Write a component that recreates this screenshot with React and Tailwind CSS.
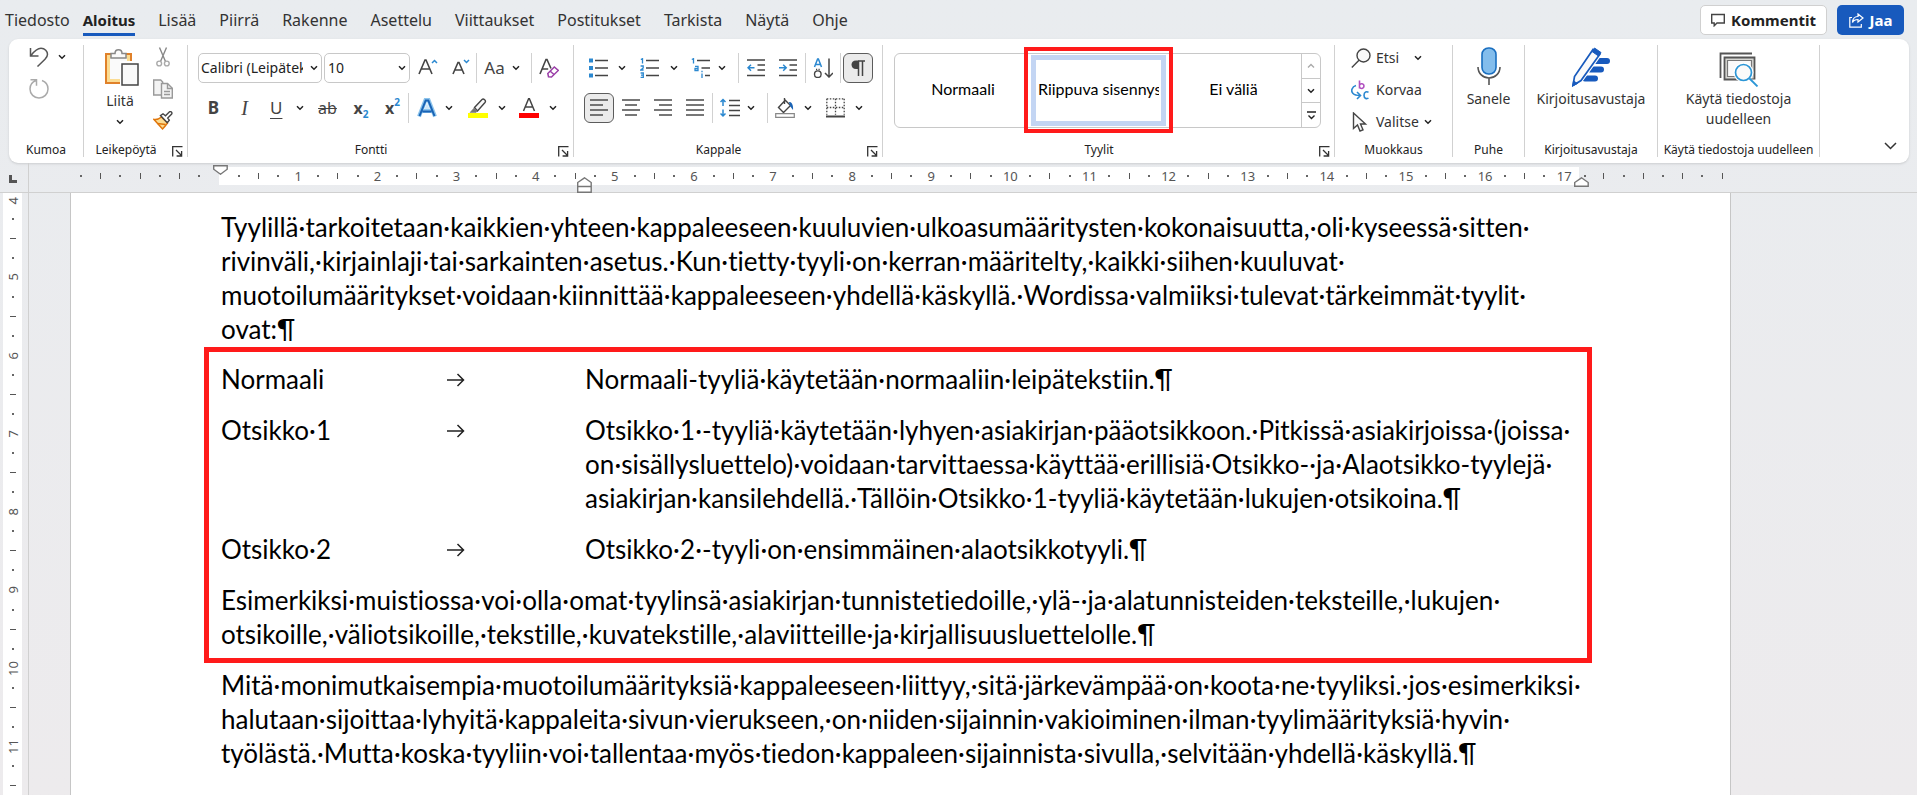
import React, { useState } from 'react';

const TABS = ['Tiedosto', 'Aloitus', 'Lisää', 'Piirrä', 'Rakenne', 'Asettelu', 'Viittaukset', 'Postitukset', 'Tarkista', 'Näytä', 'Ohje'];

const INTRO = [
    'Tyylillä tarkoitetaan kaikkien yhteen kappaleeseen kuuluvien ulkoasumääritysten kokonaisuutta, oli kyseessä sitten ',
    'rivinväli, kirjainlaji tai sarkainten asetus. Kun tietty tyyli on kerran määritelty, kaikki siihen kuuluvat ',
    'muotoilumääritykset voidaan kiinnittää kappaleeseen yhdellä käskyllä. Wordissa valmiiksi tulevat tärkeimmät tyylit ',
    'ovat:¶',
];

const STYLES = [
    { name: 'Normaali', lines: ['Normaali-tyyliä käytetään normaaliin leipätekstiin.¶'] },
    {
        name: 'Otsikko 1',
        lines: [
            'Otsikko 1 -tyyliä käytetään lyhyen asiakirjan pääotsikkoon. Pitkissä asiakirjoissa (joissa ',
            'on sisällysluettelo) voidaan tarvittaessa käyttää erillisiä Otsikko- ja Alaotsikko-tyylejä ',
            'asiakirjan kansilehdellä. Tällöin Otsikko 1-tyyliä käytetään lukujen otsikoina.¶',
        ],
    },
    { name: 'Otsikko 2', lines: ['Otsikko 2 -tyyli on ensimmäinen alaotsikkotyyli.¶'] },
];

const EXAMPLE = [
    'Esimerkiksi muistiossa voi olla omat tyylinsä asiakirjan tunnistetiedoille, ylä- ja alatunnisteiden teksteille, lukujen ',
    'otsikoille, väliotsikoille, tekstille, kuvatekstille, alaviitteille ja kirjallisuusluettelolle.¶',
];

const OUTRO = [
    'Mitä monimutkaisempia muotoilumäärityksiä kappaleeseen liittyy, sitä järkevämpää on koota ne tyyliksi. jos esimerkiksi ',
    'halutaan sijoittaa lyhyitä kappaleita sivun vierukseen, on niiden sijainnin vakioiminen ilman tyylimäärityksiä hyvin ',
    'työlästä. Mutta koska tyyliin voi tallentaa myös tiedon kappaleen sijainnista sivulla, selvitään yhdellä käskyllä.¶',
];

// --- SMALL SHARED PIECES ---
const Svg = ({ w = 20, h = 20, className = '', children }) => (
    <svg width={w} height={h} viewBox={`0 0 ${w} ${h}`} fill="none" stroke="#444" strokeWidth="1.4" className={`shrink-0 ${className}`} aria-hidden="true">
        {children}
    </svg>
);

const Chevron = ({ className = '' }) => (
    <Svg w={8} h={6} className={className}><path d="M1 1.2l3 3 3-3" stroke="#222" strokeWidth="1.5" /></Svg>
);

const Separator = ({ className = '' }) => <div className={`h-[30px] w-px shrink-0 bg-[#d1d1d1] ${className}`} />;

const IconButton = ({ label, className = '', children }) => (
    <button aria-label={label} className={`flex h-[30px] shrink-0 items-center justify-center ${className}`}>{children}</button>
);

const SplitButton = ({ label, className = '', gap = 'gap-[10px]', children }) => (
    <button aria-label={label} className={`flex h-[30px] shrink-0 items-center ${gap} ${className}`}>
        {children}
        <Chevron />
    </button>
);

const Group = ({ label, launcher, className = '', children }) => (
    <>
        <section className={`flex shrink-0 flex-col ${className}`}>
            <div className="flex-1">{children}</div>
            <div className={`flex h-6 items-center justify-center pb-[2px] ${launcher ? 'pr-1' : ''}`}>
                <span className={`flex-1 text-center text-xs leading-5 whitespace-nowrap text-[#222] ${launcher ? 'pr-1' : ''}`}>{label}</span>
                {launcher && (
                    <button aria-label={`${label}: asetukset`} className="mt-[2px]">
                        <Svg w={11} h={11}>
                            <path d="M10.5 .7H.7v9.8M4 4l5.5 5.5M9.6 5v5H4.6" stroke="#333" strokeWidth="1.3" />
                        </Svg>
                    </button>
                )}
            </div>
        </section>
        <div className="my-[6px] w-px shrink-0 bg-[#d1d1d1]" />
    </>
);

// Non-printing characters are on, so every space shows as a centred dot.
const Line = ({ text }) => (
    <span className="block whitespace-nowrap">
        {text.split(' ').map((word, i) => (
            <React.Fragment key={i}>
                {i > 0 && <span className="inline-flex w-[7px] justify-center">·</span>}
                {word}
            </React.Fragment>
        ))}
    </span>
);

const Paragraph = ({ lines, className = '' }) => (
    <p className={className}>{lines.map((l) => <Line key={l} text={l} />)}</p>
);

// --- RIBBON GROUPS ---
const UndoGroup = () => (
    <Group label="Kumoa" className="w-[74px]">
        <div className="flex flex-col gap-3 pt-2 pl-5">
            <button aria-label="Kumoa kirjoitus" className="flex items-center gap-[9px]">
                <Svg>
                    <path d="M1.5 1v8h8M2 8.500C5 4.500 8 1.300 12 1.300c4 0 6.500 3.200 6.500 6 0 2.200-1 3.500-2.500 5L8.500 19.500" stroke="#555" strokeWidth="1.500" />
                </Svg>
                <Chevron />
            </button>
            <button aria-label="Toista" className="w-5">
                <Svg>
                    <path d="M1.500 .8h6v6M7 1.500C3.500 2.800 1 6 1 10c0 5 4 9 9 9s9-4 9-9c0-4-2.500-7.300-6-8.500" stroke="#aaa" strokeWidth="1.500" />
                </Svg>
            </button>
        </div>
    </Group>
);

const ClipboardGroup = () => (
    <Group label="Leikepöytä" launcher className="w-[103px]">
        <div className="flex gap-[14px] pt-2 pl-[21px]">
            <button className="flex w-[34px] flex-col items-center pt-[2px] text-sm text-[#333]">
                <Svg w={36} h={38}>
                    <path d="M2 5h25v29H2z" fill="#fbdc93" stroke="#e0812a" strokeWidth="2" />
                    <path d="M6 9h17v21H6z" fill="#fafafa" stroke="none" />
                    <path d="M7 9V4.500h4C11 2 12.500 .8 14.500 .8S18 2 18 4.500h4V9z" fill="#fafafa" stroke="#888" strokeWidth="1.500" />
                    <path d="M18 14h17v23H18z" fill="#fafafa" stroke="white" strokeWidth="4" />
                    <path d="M18 15h16v21H18z" fill="#fafafa" stroke="#444" strokeWidth="1.500" />
                </Svg>
                <span className="mt-1 w-[30px] self-start text-center leading-5">Liitä</span>
                <Chevron className="mt-2 ml-[11px] self-start" />
            </button>
            <div className="flex flex-col gap-3">
                <button aria-label="Leikkaa">
                    <Svg>
                        <path d="M6.500 .5l6 14M13.500 .5l-6 14" stroke="#888" />
                        <circle cx="6.200" cy="16.500" r="2.400" stroke="#aaa" />
                        <circle cx="13.800" cy="16.500" r="2.400" stroke="#aaa" />
                    </Svg>
                </button>
                <button aria-label="Kopioi">
                    <Svg>
                        <path d="M8 16H.7V1h7l2 2v1" fill="#f3f3f3" stroke="#999" />
                        <path d="M8.500 4.500h6l4.800 4.800V19H8.500z" fill="#f3f3f3" stroke="#999" />
                        <path d="M14.500 4.500v5h5M11 12.500h6M11 15.500h6" stroke="#999" />
                    </Svg>
                </button>
                <button aria-label="Muotoilusivellin">
                    <Svg>
                        <path d="M1 8.500c3 .5 5-.5 7.500-2.500l6 6c-1.500 2-3 4-5 6z" fill="#fbdc93" stroke="#e0750a" strokeWidth="1.500" />
                        <path d="M4.500 12.500l8 1" stroke="#e0750a" strokeWidth="1.500" />
                        <path d="M7.500 4.500l2.500-1.700 2.500 2 4-4c1.300-.8 3 .8 2.200 2.200l-4 4 1.600 2.200-2 2.500z" fill="white" stroke="#444" />
                    </Svg>
                </button>
            </div>
        </div>
    </Group>
);

const FontGroup = ({ font, setFont, size, setSize }) => (
    <Group label="Fontti" launcher className="w-[385px]">
        <div className="flex items-center pt-[14px] pl-[10px]">
            <div className="flex h-[30px] w-[124px] items-center rounded-[5px] border border-[#c8c8c8] pr-[3px]">
                <select aria-label="Fontti" value={font} onChange={(e) => setFont(e.target.value)} className="w-[104px] min-w-0 appearance-none overflow-hidden pl-[2px] text-sm text-clip text-[#222]">
                    <option>Calibri (Leipäteksti)</option>
                    <option>Arial</option>
                </select>
                <Chevron className="ml-auto" />
            </div>
            <div className="ml-[2px] flex h-[30px] w-[86px] items-center rounded-[5px] border border-[#c8c8c8] pr-[3px]">
                <select aria-label="Fonttikoko" value={size} onChange={(e) => setSize(e.target.value)} className="min-w-0 flex-1 appearance-none pl-[3px] text-sm text-[#222]">
                    <option>10</option>
                    <option>12</option>
                </select>
                <Chevron />
            </div>
            <IconButton label="Suurenna fonttia" className="w-[36px]">
                <Svg>
                    <path d="M1 16L7 2h1l6 14M3.200 11h8.600" strokeWidth="1.600" />
                    <path d="M14 5l2.500-2.500L19 5" stroke="#2b88d0" strokeWidth="1.500" />
                </Svg>
            </IconButton>
            <IconButton label="Pienennä fonttia" className="w-[30px]">
                <Svg w={18}>
                    <path d="M1 16L6 4.500h1L12 16M3 12h7" strokeWidth="1.600" />
                    <path d="M12 2l2.500 2.500L17 2" stroke="#2b88d0" strokeWidth="1.500" />
                </Svg>
            </IconButton>
            <Separator />
            <SplitButton label="Vaihda kirjainkoko" className="w-[54px] pl-[7px]" gap="gap-[7px]">
                <span className="w-[21px] text-[17px] leading-6 text-[#444]">Aa</span>
            </SplitButton>
            <Separator />
            <IconButton label="Poista muotoilu" className="w-[34px]">
                <Svg>
                    <path d="M1 16L7 1.500h1l4 9M3.200 11h6" strokeWidth="1.600" />
                    <path d="M8.800 15.500l6.500-6.500 4 3.500-6.800 6.500-3-.3z" fill="white" stroke="#9b3fa8" strokeWidth="1.500" />
                    <path d="M11 13l4 3.500" stroke="#9b3fa8" strokeWidth="1.500" />
                </Svg>
            </IconButton>
        </div>
        <div className="flex items-center pt-[10px] pl-[10px] text-[#444]">
            <IconButton label="Lihavointi" className="w-[31px]"><span className="text-[17px] font-bold">B</span></IconButton>
            <IconButton label="Kursivointi" className="w-[31px]"><span className="font-['Liberation_Serif'] text-xl italic">I</span></IconButton>
            <SplitButton label="Alleviivaus" className="w-[50px] pl-[10px]" gap="gap-[14px]">
                <span className="text-[17px] underline underline-offset-4">U</span>
            </SplitButton>
            <IconButton label="Yliviivaus" className="w-[35px]"><span className="text-base line-through">ab</span></IconButton>
            <IconButton label="Alaindeksi" className="w-[32px]">
                <span className="text-base font-bold">x</span>
                <span className="mt-3 text-[10px] font-bold text-[#2b88d0]">2</span>
            </IconButton>
            <IconButton label="Yläindeksi" className="w-[31px]">
                <span className="text-base font-bold">x</span>
                <span className="mb-3 text-[10px] font-bold text-[#2b88d0]">2</span>
            </IconButton>
            <Separator />
            <SplitButton label="Tekstitehosteet" className="ml-2" gap="gap-2">
                <Svg>
                    <path d="M2 18.500L8.500 2h3L18 18.500M5.500 13h9" stroke="#8cc4ec" strokeWidth="4" />
                    <path d="M2.500 18L8.700 2.500h2.600L17.500 18M5.500 13.500h9" stroke="#1a63b5" strokeWidth="2" />
                    <path d="M7.500 11L10 5l2.500 6z" fill="#cfe6f8" stroke="none" />
                </Svg>
            </SplitButton>
            <SplitButton label="Korostusväri" className="ml-[15px]">
                <Svg>
                    <path d="M6.500 9.500L14 1.500c1.500-1.300 4.500 1 3 3L9.500 13z" fill="#fafafa" />
                    <path d="M6 10l3.500 3-1.500 1.500H2z" fill="#777" stroke="#777" strokeWidth=".5" />
                    <path d="M0 15h20v5H0z" fill="#ffff00" stroke="none" />
                </Svg>
            </SplitButton>
            <SplitButton label="Fontin väri" className="ml-[13px]">
                <Svg>
                    <path d="M4.500 13L9.600 .8h.8L15.500 13M6.300 9h7.400" strokeWidth="1.500" />
                    <path d="M0 15h20v5H0z" fill="#ff0000" stroke="none" />
                </Svg>
            </SplitButton>
        </div>
    </Group>
);

const Bars = ({ rows }) => (
    <Svg w={18}>
        {rows.map(([x1, x2], i) => <path key={i} d={`M${x1} ${2 + i * 5}H${x2}`} stroke="#555" strokeWidth="1.600" />)}
    </Svg>
);

const ParagraphGroup = () => (
    <Group label="Kappale" launcher className="w-[308px]">
        <div className="flex items-center pt-[14px] pl-[14px]">
            <SplitButton label="Luettelomerkit">
                <Svg>
                    <path d="M7 2.500h13M7 10h13M7 17.500h13" />
                    <path d="M1 .5h4v4H1zM1 8h4v4H1zM1 15.500h4v4H1z" fill="#2b88d0" stroke="none" />
                </Svg>
            </SplitButton>
            <SplitButton label="Numerointi" className="ml-[14px]">
                <Svg>
                    <path d="M6 2.500h13M6 10h13M6 17.500h13" />
                    <path d="M.8 1.500L2.500 .7V5.500M.6 8h2.600v2L.8 12h2.800M.6 15h2.700v4.500H.6M1 17.200h2" stroke="#2b88d0" strokeWidth="1.300" />
                </Svg>
            </SplitButton>
            <SplitButton label="Monitasoinen luettelo" className="ml-[13px]" gap="gap-[7px]">
                <Svg>
                    <path d="M6 2.500h13M10.500 10H19M14 17.500h5" />
                    <path d="M.8 1.500L2.500 .7V5.500M4 8.300h3v4.200H4v-2h3M11 15.500v4.500M11 12.800v1.500" stroke="#2b88d0" strokeWidth="1.300" />
                </Svg>
            </SplitButton>
            <Separator className="ml-3" />
            <IconButton label="Pienennä sisennystä" className="ml-2">
                <Svg>
                    <path d="M0 2h18M10.500 7H18M10.500 12H18M0 17.500h18" strokeWidth="1.500" />
                    <path d="M7.500 9.700H1M4 6.700l-3 3 3 3" stroke="#2b88d0" strokeWidth="1.500" />
                </Svg>
            </IconButton>
            <IconButton label="Suurenna sisennystä" className="ml-3">
                <Svg>
                    <path d="M0 2h18M10.500 7H18M10.500 12H18M0 17.500h18" strokeWidth="1.500" />
                    <path d="M0 9.700h7M4.200 6.700l3 3-3 3" stroke="#2b88d0" strokeWidth="1.500" />
                </Svg>
            </IconButton>
            <Separator className="ml-[6px]" />
            <IconButton label="Lajittele" className="ml-[7px]">
                <Svg>
                    <path d="M1.500 9L4.600 1h.8l3.100 8M2.600 6.500h4.800" stroke="#2b88d0" strokeWidth="1.500" />
                    <circle cx="4.800" cy="16.200" r="3.300" />
                    <path d="M3 11.500h1.200M5.500 11.500h1.200M16 .5v18M12 15l4 4 4-4" strokeWidth="1.500" />
                </Svg>
            </IconButton>
            <Separator className="ml-[7px]" />
            <IconButton label="Näytä kaikki" className="ml-[2px] w-[30px] rounded-[6px] border border-[#5c5c5c] bg-[#ebebeb]">
                <Svg w={14} h={16}>
                    <path d="M7 1h7M7.500 1v15M11.500 1v15" stroke="#444" strokeWidth="1.500" />
                    <path d="M7.500 .5H5C2 .5 .5 2.500 .5 4.700S2 9 5 9h2.500z" fill="#444" stroke="none" />
                </Svg>
            </IconButton>
        </div>
        <div className="flex items-center pt-[10px] pl-[10px]">
            <IconButton label="Tasaa vasemmalle" className="w-[30px] rounded-[6px] border border-[#5c5c5c] bg-[#ebebeb]">
                <Bars rows={[[0, 18], [0, 13], [0, 18], [0, 13]]} />
            </IconButton>
            <IconButton label="Keskitä" className="ml-2"><Bars rows={[[0, 18], [3, 15], [0, 18], [3, 15]]} /></IconButton>
            <IconButton label="Tasaa oikealle" className="ml-[14px]"><Bars rows={[[0, 18], [5, 18], [0, 18], [5, 18]]} /></IconButton>
            <IconButton label="Tasaa molemmat reunat" className="ml-[14px]"><Bars rows={[[0, 18], [0, 18], [0, 18], [0, 18]]} /></IconButton>
            <Separator className="ml-2" />
            <SplitButton label="Riviväli" className="ml-[7px]" gap="gap-[7px]">
                <Svg>
                    <path d="M9 2.500h11M9 7.500h11M9 12.500h11M9 17.500h11" strokeWidth="1.500" />
                    <path d="M3 1.500V8M.5 4L3 1.500 5.500 4M3 11.500V18M.5 15.500L3 18l2.500-2.500" stroke="#2b88d0" strokeWidth="1.500" />
                </Svg>
            </SplitButton>
            <Separator className="ml-3" />
            <SplitButton label="Varjostus" className="ml-[7px]" gap="gap-[9px]">
                <Svg>
                    <path d="M9.500 3L3.500 9.500l5 5 7-7-5.500-5.500zM9.500 0v6" />
                    <path d="M14 4c2-.5 4.500 2 4 8l-3-4z" fill="#1a63b5" stroke="none" />
                    <path d="M.7 15.700h18.600v3.600H.7z" fill="white" stroke="#888" strokeWidth="1.200" />
                </Svg>
            </SplitButton>
            <SplitButton label="Reunat" className="ml-[14px]" gap="gap-[9px]">
                <Svg>
                    <path d="M.8 .8h17.500M.8 9.500h17.500M.8 .8v16M9.500 .8v16M18.200 .8v16" strokeDasharray="1.500 1.500" strokeWidth="1.300" />
                    <path d="M0 18.500h19" strokeWidth="2" />
                </Svg>
            </SplitButton>
        </div>
    </Group>
);

const StylesGroup = () => (
    <Group label="Tyylit" launcher className="w-[451px]">
        <div className="pt-[14px] pl-[11px]">
            <div className="flex h-[75px] w-[427px] rounded-[6px] border border-[#c8c8c8] font-['Lato',sans-serif] text-base text-black [font-variant-ligatures:none]">
                <button className="w-[136px] pb-1">Normaali</button>
                <div className="relative w-[135px]">
                    <button className="mt-px h-[71px] w-full overflow-hidden border-[5px] border-[#c3d5f3] px-[2px] pb-1 text-left">
                        <span className="block overflow-hidden whitespace-nowrap">Riippuva sisennys</span>
                    </button>
                    <div className="pointer-events-none absolute -inset-x-[7px] -top-[7px] -bottom-[6px] border-4 border-[#ff1a1a]" />
                </div>
                <button className="flex-1 pb-1">Ei väliä</button>
                <div className="flex w-[19px] flex-col divide-y divide-[#c8c8c8] border-l border-[#c8c8c8]">
                    <button aria-label="Edellinen rivi" className="flex flex-1 items-center justify-center">
                        <Svg w={8} h={6}><path d="M1 4.500l3-3 3 3" stroke="#aaa" /></Svg>
                    </button>
                    <button aria-label="Seuraava rivi" className="flex flex-1 items-center justify-center"><Chevron /></button>
                    <button aria-label="Lisää tyylejä" className="flex flex-1 items-center justify-center">
                        <Svg w={9} h={9}><path d="M0 1h9M1.500 4.500l3 3 3-3" stroke="#222" /></Svg>
                    </button>
                </div>
            </div>
        </div>
    </Group>
);

const EditingGroup = () => (
    <Group label="Muokkaus" className="w-[117px]">
        <div className="flex flex-col gap-3 pt-[9px] pl-4 text-sm leading-5 text-[#333]">
            <button className="flex items-center gap-[5px]">
                <Svg>
                    <circle cx="12.500" cy="7.500" r="6.500" fill="#fafafa" />
                    <path d="M8 12.300L.8 19.500" />
                </Svg>
                <span>Etsi</span>
                <Chevron className="ml-[10px]" />
            </button>
            <button className="flex items-center gap-[5px]">
                <Svg>
                    <path d="M8.500 .5v8M8.500 5c1-2 4.500-1.700 4.500 1s-3.500 3.500-4.500 1" stroke="#b14fc0" strokeWidth="1.600" />
                    <path d="M17.500 12.300c-1.500-1-4.500-.7-4.500 2.900s3 4 4.500 2.800" stroke="#2b88d0" strokeWidth="1.600" />
                    <path d="M5 5.500C1 6.500-.5 11 2 13.500c1.500 1.500 4 2 7 2M6 12l3.500 3.500L6 19" stroke="#2b88d0" strokeWidth="1.600" />
                </Svg>
                <span>Korvaa</span>
            </button>
            <button className="flex items-center gap-[5px]">
                <Svg>
                    <path d="M2.500 1v15.500l4-3.500 2.500 6 3-1.200-2.500-5.800h5z" fill="#fafafa" />
                </Svg>
                <span>Valitse</span>
                <Chevron />
            </button>
        </div>
    </Group>
);

const BigButton = ({ icon, children }) => (
    <button className="flex w-full flex-col items-center gap-[2px] pt-2 text-sm leading-5 text-[#333]">
        {icon}
        <span>{children}</span>
    </button>
);

const DictateIcon = () => (
    <Svg w={26} h={40}>
        <path d="M2 20c0 6.500 5 11 11 11s11-4.500 11-11M13 31v7" stroke="#555" strokeWidth="1.600" />
        <rect x="6" y="1" width="14" height="26" rx="6.500" fill="#83bdec" stroke="#1a6fc0" strokeWidth="1.600" />
    </Svg>
);

const EditorIcon = () => (
    <Svg w={40} h={40}>
        <path d="M25 14h11M19 22.500h11M14 31.500h10" stroke="#185abd" strokeWidth="6" strokeLinecap="round" />
        <path d="M22 2.500l7 4.500L9.500 34 2 38.500l1.500-9z" fill="#fafafa" stroke="white" strokeWidth="4" />
        <path d="M22 2.500l7 4.500L10 33.500 2 38.500l1.500-9z" fill="#fafafa" stroke="#185abd" strokeWidth="1.700" />
        <path d="M23.500 1l6.500 4.500-2.500 3.500-6.500-4.500zM1.500 39l1-5 4 2.500z" fill="#185abd" stroke="#185abd" strokeWidth="1" />
    </Svg>
);

const ReuseIcon = () => (
    <Svg w={40} h={40}>
        <path d="M1.500 31V6.500H33" stroke="#555" strokeWidth="1.800" />
        <path d="M5.500 10.500h30v22h-30z" fill="#d8d8d4" stroke="#555" strokeWidth="1.800" />
        <path d="M8.500 13.500h24v16h-24z" fill="#fafafa" stroke="#777" strokeWidth="1.200" />
        <circle cx="24.500" cy="25.500" r="10" fill="white" stroke="none" />
        <path d="M28 35h9" stroke="white" strokeWidth="5" />
        <circle cx="24.500" cy="25.500" r="8" fill="#fafafa" stroke="#2b96d6" strokeWidth="1.700" />
        <path d="M30.500 31.500l8 8" stroke="#2b96d6" strokeWidth="1.800" />
    </Svg>
);

// --- RULERS ---
// One mark for each quarter of a centimetre; whole centimetres inside the text area get their number.
const Mark = ({ q, vertical }) => {
    if (q % 4 === 0 && q > 0 && q <= 68) {
        return <span className={vertical ? 'rotate-180 [writing-mode:vertical-rl]' : ''}>{q / 4}</span>;
    }
    if (q % 2 === 0) return <i className={`bg-[#555] ${vertical ? 'h-px w-[6px]' : 'h-[6px] w-px'}`} />;
    return <i className="size-[2px] bg-[#666]" />;
};

const Marks = ({ from, to, className = '' }) => (
    <div className={`flex ${className}`}>
        {Array.from({ length: to - from + 1 }, (_, i) => (
            <div key={i} className="flex min-w-0 flex-1 items-center justify-center"><Mark q={from + i} /></div>
        ))}
    </div>
);

const HorizontalRuler = () => (
    <div className="flex h-[30px] shrink-0 border-b border-[#d0d0d0] text-[13px] leading-[18px] text-[#555]">
        <div className="flex w-[29px] items-end border-r border-[#d0d0d0] pb-[9px] pl-[9px]">
            <div className="size-[8px] border-b-3 border-l-3 border-[#555]" />
        </div>
        <div className="relative flex flex-1 items-start pt-1">
            <Marks from={-7} to={-1} className="ml-[42px] h-[18px] w-[138px]" />
            <div className="ml-[10px] flex h-[18px] w-[1360px] bg-white pl-[10px]">
                <Marks from={1} to={68} className="w-[1345px]" />
            </div>
            <div className="flex h-[18px] w-[15px] items-center pl-[5px]"><Mark q={69} /></div>
            <Marks from={70} to={76} className="h-[18px] w-[138px]" />
            <Svg w={15} h={10} className="absolute top-[2px] left-[184px]">
                <path d="M.7 .7h13.500v3.500l-6.700 5-6.800-5z" fill="white" stroke="#777" />
            </Svg>
            <Svg w={15} h={16} className="absolute top-[14px] left-[548px]">
                <path d="M.7 15.300V5.500L7.500 .8l6.700 4.700v9.800zM.7 9.500h13.500" fill="white" stroke="#777" />
            </Svg>
            <Svg w={15} h={10} className="absolute top-[14px] left-[1545px]">
                <path d="M.7 9.300V5.500L7.500 .8l6.700 4.700v3.800z" fill="white" stroke="#777" />
            </Svg>
        </div>
    </div>
);

const VerticalRuler = () => (
    <div className="w-[29px] shrink-0 border-r border-[#d0d0d0] pl-[3px] text-[13px] leading-[18px] text-[#555]">
        <div className="flex h-full w-[19px] flex-col bg-white">
            <div className="flex h-[16px] items-center justify-center"><Mark q={16} vertical /></div>
            <div className="flex h-[594px] flex-col">
                {Array.from({ length: 30 }, (_, i) => (
                    <div key={i} className="flex min-h-0 flex-1 items-center justify-center"><Mark q={17 + i} vertical /></div>
                ))}
            </div>
        </div>
    </div>
);

const App = () => {
    const [tab, setTab] = useState('Aloitus');
    const [font, setFont] = useState('Calibri (Leipäteksti)');
    const [size, setSize] = useState('10');

    return (
        <div className="flex h-screen flex-col overflow-hidden bg-linear-to-b from-[#e9ecef] to-[#edebed] font-['Noto_Sans',sans-serif]">
            {/* --- TAB ROW --- */}
            <header className="flex h-[39px] shrink-0 items-start justify-between pr-[13px] pl-[5px]">
                <nav className="flex gap-[23px] pt-2 text-base leading-6 text-[#333]">
                    {TABS.map((t) => (
                        <button key={t} onClick={() => setTab(t)} className={`flex h-[28px] items-start first:-mr-[10px] ${t === tab ? 'border-b-3 border-[#185abd] text-[15px] font-bold text-[#222]' : ''}`}>{t}</button>
                    ))}
                </nav>
                <div className="flex gap-[10px] pt-[5px] text-[15px] font-bold">
                    <button className="flex h-[30px] w-[127px] items-center justify-center gap-[6px] rounded-[5px] border border-[#d0d0d0] bg-white text-[#222]">
                        <Svg w={14} h={14}><path d="M.7 1.500h12.600v8.500H6l-2.800 2.800V10H.7z" /></Svg>
                        Kommentit
                    </button>
                    <button className="flex h-[30px] w-[67px] items-center justify-center gap-[6px] rounded-[5px] bg-[#185abd] text-white">
                        <Svg w={15} h={15}>
                            <path d="M3 4.500H.8v9.700h11.500V11M9 1l5 4-5 4V6.500c-3 0-4.500 1-5.500 3 .2-3.500 2-6 5.500-6z" stroke="white" strokeWidth="1.200" />
                        </Svg>
                        Jaa
                    </button>
                </div>
            </header>

            {/* --- RIBBON --- */}
            <div className="mr-2 ml-[9px] flex h-[124px] shrink-0 rounded-[9px] bg-white shadow">
                <UndoGroup />
                <ClipboardGroup />
                <FontGroup font={font} setFont={setFont} size={size} setSize={setSize} />
                <ParagraphGroup />
                <StylesGroup />
                <EditingGroup />
                <Group label="Puhe" className="w-[71px]"><BigButton icon={<DictateIcon />}>Sanele</BigButton></Group>
                <Group label="Kirjoitusavustaja" className="w-[132px]"><BigButton icon={<EditorIcon />}>Kirjoitusavustaja</BigButton></Group>
                <Group label="Käytä tiedostoja uudelleen" className="w-[161px]">
                    <BigButton icon={<ReuseIcon />}>Käytä tiedostoja<br />uudelleen</BigButton>
                </Group>
                <div className="flex flex-1 items-end justify-end pr-3 pb-[13px]">
                    <button aria-label="Pienennä valintanauha">
                        <Svg w={13} h={8}><path d="M1 1l5.500 5.500L12 1" stroke="#333" strokeWidth="1.500" /></Svg>
                    </button>
                </div>
            </div>

            <HorizontalRuler />

            {/* --- DOCUMENT --- */}
            <div className="flex min-h-0 flex-1">
                <VerticalRuler />
                <main className="ml-[41px] w-[1661px] border-x border-[#c6c6c6] bg-white pt-[17px] pl-[150px] font-['Lato',sans-serif] text-[26px] leading-[34px] text-black [font-variant-ligatures:none]">
                    <Paragraph lines={INTRO} />
                    <div className="mt-px -ml-[17px] flex w-[1388px] flex-col gap-[17px] border-[5px] border-[#ff1a1a] pt-[10px] pb-[7px] pl-3">
                        {STYLES.map((s) => (
                            <div key={s.name} className="flex">
                                <div className="w-[226px]"><Line text={s.name} /></div>
                                <div className="w-[138px]">
                                    <Svg w={18} h={14} className="mt-[11px]"><path d="M0 7h17M10.500 1l6 6-6 6" stroke="#222" strokeWidth="1.500" /></Svg>
                                </div>
                                <Paragraph lines={s.lines} />
                            </div>
                        ))}
                        <Paragraph lines={EXAMPLE} />
                    </div>
                    <Paragraph lines={OUTRO} className="mt-[5px]" />
                </main>
            </div>
        </div>
    );
};

export default App;
